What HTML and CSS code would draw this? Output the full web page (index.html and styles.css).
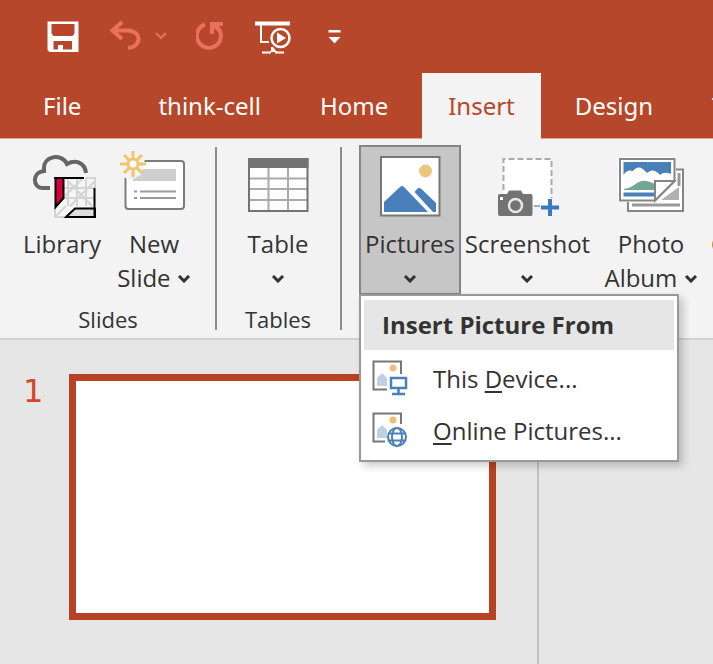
FILE: index.html
```html
<!DOCTYPE html>
<html lang="en">
<head>
<meta charset="utf-8">
<title>Presentation</title>
<link rel="stylesheet" href="styles.css">
</head>
<body>
<header class="titlebar">
  <div class="quick">
    <button class="tool" aria-label="Save"><svg width="34" height="34" viewBox="46 20 34 34"><path fill="#fff" fill-rule="evenodd" d="M47.500 21.500H78.500V52H49.500L47.500 50ZM51.500 24V33.500L53.500 36H72.500L74.500 33.500V24ZM53.500 41V49.500H58V45H63V49.500H72V41Z"/></svg></button>
    <div class="split">
      <button class="tool" aria-label="Undo"><svg width="34" height="34" viewBox="108 20 34 34"><path d="M122 22L112.500 30.500L122 39M112.500 30.500H128C142 31 142 47 128 48" fill="none" stroke="#ea705b" stroke-width="4"/></svg></button>
      <button class="tool" aria-label="Undo history"><svg width="14" height="34" viewBox="154 20 14 34"><path d="M156 33L161 38L166 33" fill="none" stroke="#ea705b" stroke-width="2"/></svg></button>
    </div>
    <button class="tool" aria-label="Repeat"><svg width="28" height="34" viewBox="196 20 28 34"><path d="M205 24.500A12 12 0 1 0 217 27" fill="none" stroke="#ea705b" stroke-width="4"/><path d="M212 34V24H223M212 24L219 30" fill="none" stroke="#ea705b" stroke-width="4"/></svg></button>
    <button class="tool" aria-label="Start slide show"><svg width="40" height="34" viewBox="252 20 40 34"><path d="M255 23.500H290" stroke="#fff" stroke-width="4"/><path d="M261 25V42H269M262 52.500H271M275 52.500H284M272 47V51" stroke="#fff" stroke-width="2" fill="none"/><path d="M270 52L273 47L277 52Z" fill="#fff"/><circle cx="280.500" cy="38" r="9" fill="none" stroke="#fff" stroke-width="2.500"/><path d="M277 32.500L286 38L277 43.500Z" fill="#fff"/></svg></button>
    <button class="tool" aria-label="Customize toolbar"><svg width="28" height="34" viewBox="320 20 28 34"><path d="M328.500 30H340.500V32.500H328.500ZM328.500 37H340.500L334.500 43.500Z" fill="#fff"/></svg></button>
  </div>
  <nav class="tabs">
    <a class="tab tab-file" href="#file">File</a>
    <a class="tab" href="#think-cell">think-cell</a>
    <a class="tab" href="#home">Home</a>
    <a class="tab active" href="#insert">Insert</a>
    <a class="tab" href="#design">Design</a>
    <a class="tab" href="#transitions">T</a>
  </nav>
</header>

<section class="ribbon">
  <div class="group slides">
    <div class="commands">
      <button class="command"><svg class="icon" viewBox="28 154 68 66"><path d="M50 188H43C32 188 32 172 44 171C42 155 62 153 67 164C76 159 85 163 86 173" fill="none" stroke="#666" stroke-width="4"/><path d="M55 178H95V218H55Z" fill="#f5f5f5"/><path d="M68 181V206M77 178V206M86 178V206M86 178H95V188M64 188H94M64 198H94M65 196L82 179M70 206L94 182M67 180L92 206M56 216L66 206M55 208V217H64" stroke="#d4d4d4" stroke-width="2" fill="none"/><path d="M55.500 178H63.500V198L55.500 207Z" fill="#d8003c" stroke="#000" stroke-width="2"/><path d="M66 217L75 208.500H95V217Z" fill="#ddd" stroke="#000" stroke-width="2"/><path d="M54 178H84M94.500 188V217H66" stroke="#000" stroke-width="2" fill="none"/></svg><span>Library</span></button>
      <button class="command"><svg class="icon" viewBox="119 154 68 66"><rect x="124.500" y="161" width="58.500" height="48" rx="3" fill="#fff" stroke="#7c7c7c" stroke-width="2"/><path d="M132 169H175V181H132Z" fill="#cfcfcf"/><path d="M133 191.500H136M139 191.500H175M133 198H136M139 198H175" stroke="#999" stroke-width="2"/><path d="M119 151H146L140 175L130 180L119 176Z" fill="#f3f3f3"/><g stroke="#efc570" stroke-width="3"><circle cx="132" cy="164" r="5" fill="#fff"/><path d="M132 151V158M132 170V177M119 164H126M138 164H145M123 155L128 160M136 168L141 173M123 173L128 168M136 160L141 155"/></g></svg><span>New<br>Slide <svg class="chevron" viewBox="0 0 14 8"><path d="M2 1L7 6L12 1"/></svg></span></button>
    </div>
    <h2 class="group-name">Slides</h2>
  </div>
  <div class="group tables">
    <div class="commands">
      <button class="command"><svg class="icon" viewBox="245 154 68 66"><path d="M250 159H308.500V211H250Z" fill="#fff"/><path d="M269.500 168V211M289 168V211M250 178.500H308M250 189H308M250 200H308" stroke="#aaa" stroke-width="2"/><path d="M250 159H308.500V211H250Z" fill="none" stroke="#737373" stroke-width="2"/><path d="M249 158H309.500V168H249Z" fill="#737373"/></svg><span>Table<br><svg class="chevron" viewBox="0 0 14 8"><path d="M2 1L7 6L12 1"/></svg></span></button>
    </div>
    <h2 class="group-name">Tables</h2>
  </div>
  <div class="group images">
    <div class="commands">
      <div class="pictures">
        <button class="command pressed" aria-expanded="true"><svg class="icon" viewBox="375 154 68 66"><path d="M380 157H438.500V215.500H380Z" fill="#fff" stroke="#777" stroke-width="2"/><circle cx="424.500" cy="171" r="6.500" fill="#ecc67b"/><path d="M383 212V202L399 187Q401 185 403 187L427 212ZM413.500 192L416 189Q418 187 420.500 189L435 203V212H432Z" fill="#4a80b9"/></svg><span>Pictures<br><svg class="chevron" viewBox="0 0 14 8"><path d="M2 1L7 6L12 1"/></svg></span></button>
        <div class="menu">
          <h3 class="menu-title">Insert Picture From</h3>
          <button class="menu-item"><svg class="menu-icon" viewBox="372 362 36 38"><path d="M401 377V364.500H373.500V392.500H387" fill="none" stroke="#777" stroke-width="2"/><circle cx="393" cy="371" r="3.500" fill="#ecc07a"/><path d="M377 389V381L382 376L387 381V389Z" fill="#bfd0e4"/><path d="M391 381H406V391H391ZM398.500 391V396M392 397H405" fill="none" stroke="#4a80b9" stroke-width="2.500"/></svg><span>This <u>D</u>evice...</span></button>
          <button class="menu-item"><svg class="menu-icon" viewBox="372 414 36 38"><path d="M401 427V416.500H373.500V444.500H385" fill="none" stroke="#777" stroke-width="2"/><circle cx="393" cy="423" r="3.500" fill="#ecc07a"/><path d="M377 441V433L382 428L387 433V441Z" fill="#bfd0e4"/><g fill="#fff" stroke="#4a80b9" stroke-width="2"><circle cx="397" cy="440" r="9"/><ellipse cx="397" cy="440" rx="5" ry="9"/><path d="M389 436.500H405M389 443.500H405"/></g></svg><span><u>O</u>nline Pictures...</span></button>
        </div>
      </div>
      <button class="command screenshot"><svg class="icon" viewBox="494 154 68 66"><path d="M503 159H551V206H503Z" fill="#fff"/><path d="M503.500 190V159H551.500V198M534 206H541" fill="none" stroke="#aaa" stroke-width="2" stroke-dasharray="6 3"/><path d="M498 196Q498 194 500 194H507L509 190.500H521L523 194H531Q532.500 194 532.500 196V214Q532.500 216 531 216H500Q498 216 498 214Z" fill="#737373"/><circle cx="515.500" cy="205.500" r="6.500" fill="none" stroke="#e8e8e8" stroke-width="2.500"/><path d="M500 197H503V200H500Z" fill="#fff"/><path d="M541 207.500H559M550 199V216" stroke="#3b78bd" stroke-width="4"/></svg><span>Screenshot<br><svg class="chevron" viewBox="0 0 14 8"><path d="M2 1L7 6L12 1"/></svg></span></button>
      <button class="command album"><svg class="icon" viewBox="617 154 68 66"><path d="M628 169.500H683V211H628Z" fill="#fff" stroke="#858585" stroke-width="2"/><path d="M632 205H680M679 173V186" stroke="#999" stroke-width="3"/><path d="M618 157H676V183L657 202H618Z" fill="#fff"/><path d="M661 200L679 187V200Z" fill="#b0b0b0"/><path d="M620 159H674.500V181L655 200.500H620Z" fill="#fff" stroke="#858585" stroke-width="2"/><path d="M623.500 162H671V174Q664 171 660 175Q653 167 647 173Q639 163 633 171Q627 169 623.500 175Z" fill="#4a80b9"/><path d="M624 189Q631 188 637 183Q643 179 650 182L655 184V190H624Z" fill="#74a697"/><path d="M623.500 192.500H654V196.500H623.500Z" fill="#4a80b9"/><path d="M655 181H674.500L655 200.500Z" fill="#fff" stroke="#858585" stroke-width="2"/></svg><span>Photo<br>Album <svg class="chevron" viewBox="0 0 14 8"><path d="M2 1L7 6L12 1"/></svg></span></button>
      <button class="command cameo"><span>C</span></button>
    </div>
  </div>
</section>

<main class="workspace">
  <aside class="panel">
    <span class="number">1</span>
    <div class="thumbnail"></div>
  </aside>
  <section class="canvas"></section>
</main>
</body>
</html>
```
FILE: styles.css
```css
* { box-sizing: border-box; }
body {
  margin: 0;
  min-height: 100vh;
  display: flex;
  flex-direction: column;
  overflow: hidden;
  background: #e6e6e6;
  color: #333;
  font-family: "Open Sans", sans-serif;
  font-size: 24px;
}
button {
  margin: 0;
  padding: 0;
  border: 0;
  background: none;
  color: inherit;
  font: inherit;
}
svg { display: block; }
h2, h3 { margin: 0; font: inherit; }

.titlebar { background: #b7472a; border-bottom: 1px solid #e8a393; }
.quick {
  display: flex;
  align-items: center;
  gap: 28px;
  height: 73px;
  padding-left: 46px;
}
.split { display: flex; gap: 12px; }

.tabs { display: flex; gap: 9px; padding-left: 18px; overflow: hidden; margin-bottom: -1px; }
.tab {
  flex: none;
  height: 65px;
  padding: 0 25px;
  line-height: 65px;
  color: #fff;
  text-decoration: none;
  font-family: "Noto Sans", sans-serif;
}
.tab-file { margin-right: 18px; }
.tab.active { height: 66px; padding: 0 26px; background: #f3f3f3; color: #b7472a; }

.ribbon {
  display: flex;
  background: #f3f3f3;
  border-bottom: 2px solid #d2d2d2;
  padding-top: 6px;
}
.group { position: relative; flex: none; height: 193px; display: flex; flex-direction: column; }
.slides { padding: 0 17px 0 16px; }
.slides::after, .tables::after {
  content: "";
  position: absolute;
  top: 2px;
  right: 0;
  bottom: 8px;
  width: 2px;
  background: #8c8c8c;
}
.tables { padding: 0 18px 0 15px; }
.images { padding-left: 17px; }
.commands { display: flex; flex: 1; align-items: flex-start; }
.group-name { height: 37px; line-height: 36px; text-align: center; font-size: 22px; }
.command {
  display: flex;
  flex-direction: column;
  align-items: center;
  gap: 7px;
  height: 150px;
  min-width: 92px;
  padding-top: 9px;
  line-height: 34px;
  white-space: nowrap;
}
.icon { width: 68px; height: 66px; overflow: visible; }
.chevron {
  display: inline-block;
  width: 14px;
  height: 8px;
  vertical-align: 4px;
  fill: none;
  stroke: #333;
  stroke-width: 3;
}
.pictures { position: relative; }
.pressed { width: 102px; background: #c6c6c6; border: 2px solid #858585; padding-top: 7px; }
.screenshot { width: 133px; }
.album { width: 114px; }
.cameo { min-width: 0; padding: 82px 0 0 3px; }

.menu {
  position: absolute;
  z-index: 1;
  top: 149px;
  left: 0;
  width: 320px;
  padding: 4px 3px;
  background: #fff;
  border: 2px solid #999;
  box-shadow: 4px 4px 8px rgba(0, 0, 0, 0.2);
}
.menu-title {
  height: 50px;
  margin-bottom: 2px;
  padding-left: 18px;
  line-height: 50px;
  background: #e6e6e6;
  font-weight: 700;
}
.menu-item { display: flex; align-items: center; gap: 25px; width: 100%; height: 52px; padding-left: 8px; }
.menu-icon { width: 36px; height: 38px; }
u { text-decoration-thickness: 2px; text-underline-offset: 3px; }

.workspace { flex: 1; display: grid; grid-template-columns: minmax(0, 539px) 1fr; }
.panel {
  display: flex;
  align-items: flex-start;
  gap: 22px;
  padding: 34px 41px 44px 23px;
  border-right: 2px solid #c2c2c2;
}
.number { width: 24px; line-height: 34px; color: #d24726; font-family: "DejaVu Sans", sans-serif; font-size: 32px; }
.thumbnail { flex: 1; aspect-ratio: 427 / 246; background: #fff; border: 7px solid #b74224; }
```
